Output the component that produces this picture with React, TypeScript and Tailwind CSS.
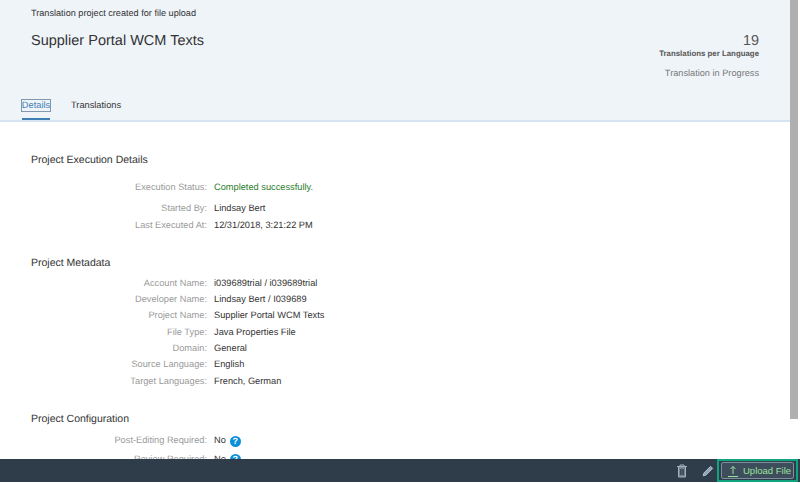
const font = "font-['Liberation_Sans',Arial,sans-serif] [text-rendering:geometricPrecision]";

function Row({ label, children, className = "" }: { label: string; children: React.ReactNode; className?: string }) {
  return (
    <div className={`flex h-[16.35px] items-center text-[9.25px] leading-none ${className}`}>
      <span className="w-[207px] shrink-0 text-right text-[#9a9a9a]">{label}</span>
      <span className="ml-[7px] flex items-center text-[#333333]">{children}</span>
    </div>
  );
}

function Help() {
  return (
    <span className="ml-[4px] flex h-[11px] w-[11px] items-center justify-center rounded-full bg-[#0a8fdc] text-[9px] font-bold leading-none text-white">?</span>
  );
}

function Section({ title, className = "" }: { title: string; className?: string }) {
  return <h2 className={`text-[10.5px] leading-none text-[#333333] ${className}`}>{title}</h2>;
}

export default function App() {
  return (
    <div className={`flex h-[483px] w-[800px] flex-col overflow-hidden bg-white ${font}`}>
      <div className="flex min-h-0 flex-1">
        <main className="w-[790px] shrink-0 overflow-hidden">
          <header className="h-[122px] border-b-2 border-[#d5e4f0] bg-[#eff4f9]">
            <div className="flex h-[95px] justify-between pl-[31px] pr-[31px]">
              <div>
                <p className="pt-[8px] text-[9.15px] leading-[11px] text-[#333333]">Translation project created for file upload</p>
                <h1 className="mt-[13px] text-[14.5px] leading-[18px] text-[#333333]">Supplier Portal WCM Texts</h1>
              </div>
              <div className="flex flex-col items-end pt-[33px]">
                <span className="text-[14.4px] leading-[16px] text-[#555555]">19</span>
                <span className="text-[7.85px] font-bold leading-[10px] text-[#555555]">Translations per Language</span>
                <span className="mt-[8px] text-[9.2px] leading-[12px] text-[#777777]">Translation in Progress</span>
              </div>
            </div>
            <nav className="flex h-[25px] items-start gap-[21px] pl-[22px] text-[9.25px] leading-[11px]">
              <div className="flex h-[25px] w-[28px] flex-col items-center justify-between">
                <span className="mt-[4px] border border-[#7f98ad] text-[#3f7fb5]">Details</span>
                <span className="h-[2px] w-[28px] bg-[#3f7fb5]" />
              </div>
              <span className="mt-[5px] text-[#333333]">Translations</span>
            </nav>
          </header>
          <div className="pl-[31px]">
            <Section title="Project Execution Details" className="pt-[33px]" />
            <div className="ml-[-31px] mt-[14px]">
              <Row label="Execution Status:"><span className="text-[#2b7d2b]">Completed successfully.</span></Row>
              <Row label="Started By:" className="mt-[5px]">Lindsay Bert</Row>
              <Row label="Last Executed At:">12/31/2018, 3:21:22 PM</Row>
            </div>
            <Section title="Project Metadata" className="mt-[24px]" />
            <div className="ml-[-31px] mt-[7px]">
              <Row label="Account Name:">i039689trial / i039689trial</Row>
              <Row label="Developer Name:">Lindsay Bert / I039689</Row>
              <Row label="Project Name:">Supplier Portal WCM Texts</Row>
              <Row label="File Type:">Java Properties File</Row>
              <Row label="Domain:">General</Row>
              <Row label="Source Language:">English</Row>
              <Row label="Target Languages:">French, German</Row>
            </div>
            <Section title="Project Configuration" className="mt-[25px]" />
            <div className="ml-[-31px] mt-[8px]">
              <Row label="Post-Editing Required:">No<Help /></Row>
              <Row label="Review Required:" className="mt-[2px]">No<Help /></Row>
            </div>
          </div>
        </main>
        <div className="h-[419px] w-[8px] bg-[#b0b0b0]" />
      </div>
      <footer className="flex h-[23px] shrink-0 items-center justify-end bg-[#2f3c4a]">
        <svg width="12" height="14" viewBox="0 0 12 14" className="mr-[14px]" fill="#75838f" stroke="#a3b2bf" strokeWidth="1">
          <path d="M1 2.5h10M4 2.5V1h4v1.5" fill="none" />
          <path d="M2.5 2.5v10.5h7V2.5z" />
          <path d="M4.7 5v6M6 5v6M7.3 5v6" stroke="#2f3c4a" />
        </svg>
        <svg width="12" height="12" viewBox="0 0 12 12" className="mr-[3px]" fill="#8ea5b8" stroke="#c3d2de" strokeWidth="0.8">
          <path d="M1.2 10.8l.7-2.8L8.6 1.3l2.1 2.1-6.7 6.7z" />
        </svg>
        <div className="mr-[2px] flex h-[23px] w-[81px] items-center justify-center border-2 border-[#10a37f]">
          <button className="flex h-[17px] w-[73px] items-center justify-start gap-[4px] rounded-[2px] border border-[#7e8e9c] bg-[#3d4d5c] pl-[5px] text-[9.5px] leading-none text-[#9ce29c]">
            <svg width="12" height="12" viewBox="0 0 12 12" fill="none" stroke="#9ce29c" strokeWidth="1">
              <path d="M1 11.5h10M6 9V1.5M3.5 4L6 1.5 8.5 4" />
            </svg>
            Upload File
          </button>
        </div>
      </footer>
      <div className="h-px shrink-0 bg-white" />
    </div>
  );
}
